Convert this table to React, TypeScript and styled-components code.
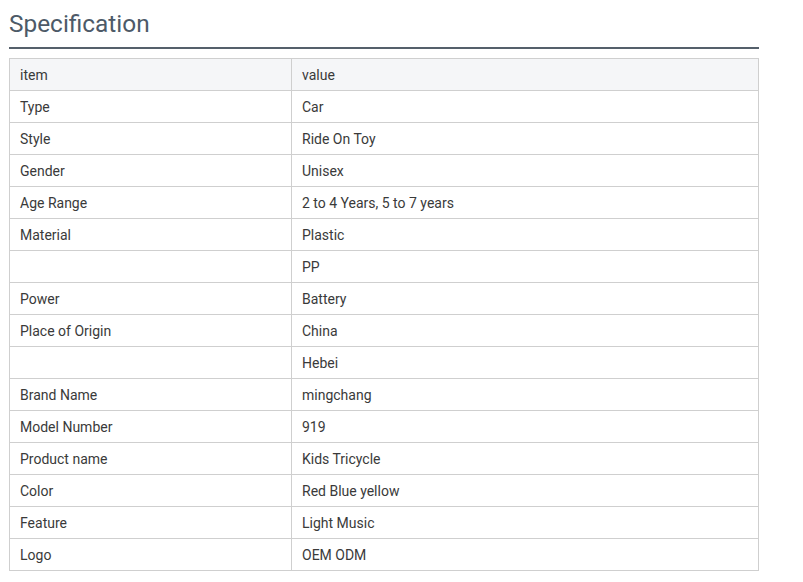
import React from "react";
import styled, { createGlobalStyle } from "styled-components";

const Global = createGlobalStyle`
  html, body { margin: 0; padding: 0; background: #fff; }
  body { font-family: Roboto, "Liberation Sans", Arial, sans-serif; }
`;

const Wrap = styled.div`
  padding: 8px 0 0 9px;
  width: 750px;
`;

const Title = styled.h2`
  margin: 0;
  font-size: 24.4px;
  line-height: 32px;
  font-weight: 400;
  color: #4d5a68;
  padding-bottom: 7px;
  border-bottom: 2px solid #55606b;
`;

const Table = styled.table`
  margin-top: 9px;
  width: 750px;
  border-collapse: collapse;
  table-layout: fixed;
  font-size: 14px;
  color: #3a3a3a;
`;

const Row = styled.tr<{ $head?: boolean }>`
  background: ${(p) => (p.$head ? "#f5f6f8" : "#fff")};
`;

const Cell = styled.td`
  border: 1px solid #cfcfcf;
  height: 31px;
  padding: 0 10px;
  line-height: 20px;
  vertical-align: middle;
  &:first-child { width: 261px; }
`;

const rows: [string, string][] = [
  ["Type", "Car"],
  ["Style", "Ride On Toy"],
  ["Gender", "Unisex"],
  ["Age Range", "2 to 4 Years, 5 to 7 years"],
  ["Material", "Plastic"],
  ["", "PP"],
  ["Power", "Battery"],
  ["Place of Origin", "China"],
  ["", "Hebei"],
  ["Brand Name", "mingchang"],
  ["Model Number", "919"],
  ["Product name", "Kids Tricycle"],
  ["Color", "Red Blue yellow"],
  ["Feature", "Light Music"],
  ["Logo", "OEM ODM"],
];

export default function App() {
  return (
    <>
      <Global />
      <Wrap>
        <Title>Specification</Title>
        <Table>
          <tbody>
            <Row $head>
              <Cell>item</Cell>
              <Cell>value</Cell>
            </Row>
            {rows.map(([k, v], i) => (
              <Row key={i}>
                <Cell>{k}</Cell>
                <Cell>{v}</Cell>
              </Row>
            ))}
          </tbody>
        </Table>
      </Wrap>
    </>
  );
}
